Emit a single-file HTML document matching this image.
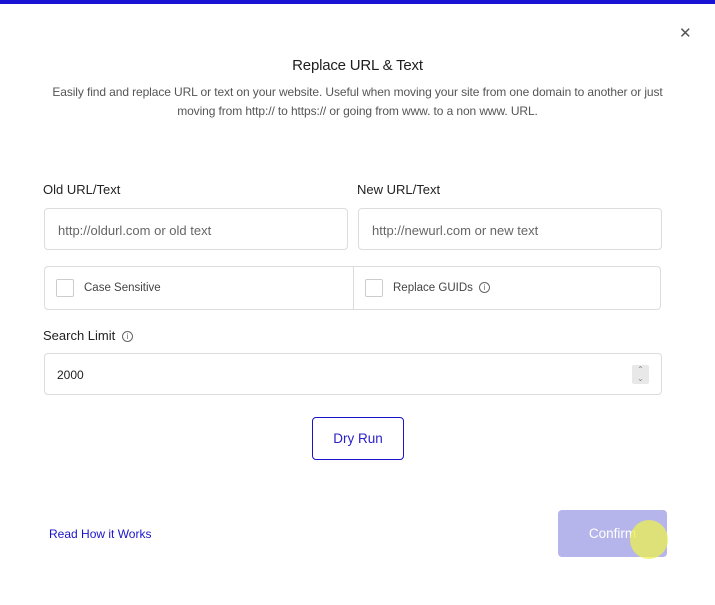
<!DOCTYPE html>
<html><head><meta charset="utf-8"><style>
*{box-sizing:border-box;margin:0;padding:0}
body{width:715px;height:605px;background:#fff;font-family:"Liberation Sans",sans-serif;color:#1e1e1e;position:relative;overflow:hidden}
.bar{position:absolute;left:0;top:0;width:715px;height:4px;background:#1912d2}
.abs{position:absolute}
.close{left:679px;top:24px;font-size:15px;color:#555}
h1{position:absolute;left:0;width:715px;top:57px;text-align:center;font-size:15px;font-weight:normal;letter-spacing:-0.2px}
.desc{position:absolute;left:10px;width:695px;top:83px;text-align:center;font-size:12px;line-height:19px;color:#555;letter-spacing:-0.1px;white-space:nowrap}
.lbl{font-size:13px;color:#222}
.inp{border:1px solid #dcdcdc;border-radius:4px;background:#fff}
.ph{font-size:13px;color:#666;position:absolute;left:13px;top:14px}
.cb{position:absolute;width:18px;height:18px;border:1px solid #ccc;border-radius:2px;top:12px}
.cbl{position:absolute;top:15px;font-size:11.5px;color:#444}
.info{display:inline-block;width:11px;height:11px;border:1px solid #666;border-radius:50%;font-size:8px;line-height:9px;text-align:center;color:#666;vertical-align:middle;margin-left:3px}
</style></head><body>
<div class="bar"></div>
<div class="abs close">✕</div>
<h1>Replace URL &amp; Text</h1>
<div class="desc">Easily find and replace URL or text on your website. Useful when moving your site from one domain to another or just<br>moving from http:// to https:// or going from www. to a non www. URL.</div>
<div class="abs lbl" style="left:43px;top:182px">Old URL/Text</div>
<div class="abs lbl" style="left:357px;top:182px">New URL/Text</div>
<div class="abs inp" style="left:44px;top:208px;width:304px;height:42px"><span class="ph">http://oldurl.com or old text</span></div>
<div class="abs inp" style="left:358px;top:208px;width:304px;height:42px"><span class="ph">http://newurl.com or new text</span></div>
<div class="abs inp" style="left:44px;top:266px;width:617px;height:44px">
<div class="abs" style="left:308px;top:0;width:1px;height:42px;background:#dcdcdc"></div>
<div class="cb" style="left:11px"></div><span class="cbl" style="left:39px">Case Sensitive</span>
<div class="cb" style="left:320px"></div><span class="cbl" style="left:348px">Replace GUIDs <span class="info">i</span></span>
</div>
<div class="abs lbl" style="left:43px;top:328px">Search Limit <span class="info">i</span></div>
<div class="abs inp" style="left:44px;top:353px;width:618px;height:42px">
<span class="abs" style="left:12px;top:14px;font-size:12px;color:#222">2000</span>
<div class="abs" style="left:587px;top:11px;width:17px;height:19px;background:#e8e8e8;border-radius:2px;font-size:8px;color:#888;text-align:center;line-height:9px">⌃<br>⌄</div>
</div>
<div class="abs" style="left:312px;top:417px;width:92px;height:43px;border:1px solid #1a14c8;border-radius:4px;color:#2a20c8;font-size:13.5px;text-align:center;line-height:41px">Dry Run</div>
<div class="abs" style="left:49px;top:527px;font-size:12px;color:#1a14c8">Read How it Works</div>
<div class="abs" style="left:558px;top:510px;width:109px;height:47px;background:#b5b5eb;border-radius:4px;color:#fff;font-size:13.5px;text-align:center;line-height:47px">Confirm</div>
<div class="abs" style="left:630px;top:520px;width:38px;height:39px;border-radius:50%;background:rgba(235,240,80,0.75)"></div>
</body></html>
